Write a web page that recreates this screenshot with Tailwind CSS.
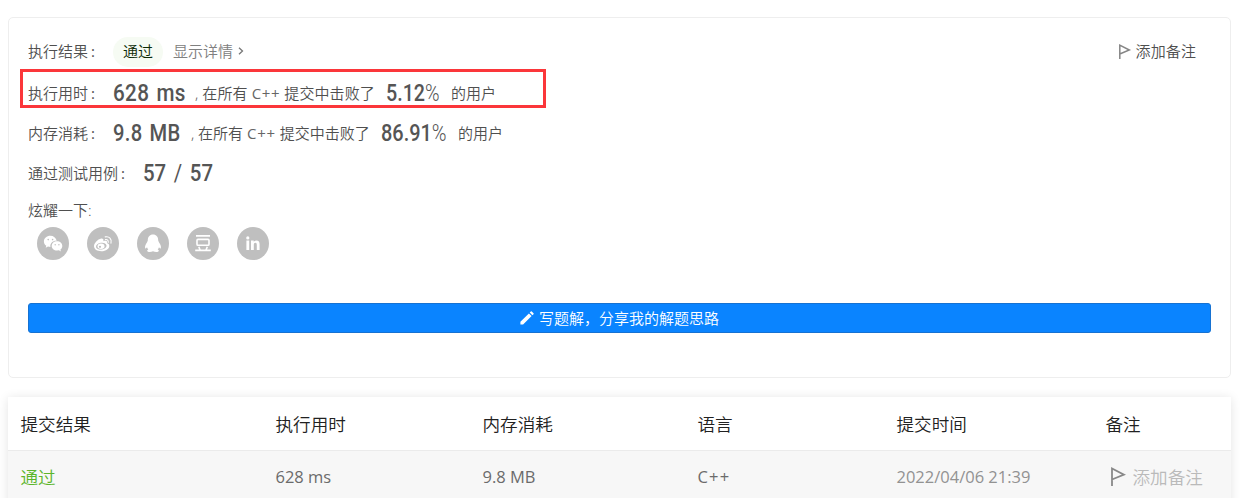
<!DOCTYPE html>
<html lang="zh-CN">
<head>
<meta charset="utf-8">
<title>提交结果</title>
<script src="https://cdn.jsdelivr.net/npm/@tailwindcss/browser@4"></script>
</head>
<body class="h-[498px] overflow-hidden bg-white pt-[17px] pl-2 font-['Open_Sans','Noto_Sans_CJK_SC',sans-serif] text-[15px] font-[350] whitespace-nowrap text-[#4f4f4f]">
<section class="relative h-[361px] w-[1223px] rounded-[5px] border border-[#eeeeee] px-[19px] pt-[17px]">
  <div class="pointer-events-none absolute top-[51px] left-[11px] h-[39px] w-[526px] border-3 border-[#fb363a]"></div>
  <div class="flex h-8 items-center">
    <span class="w-[85px]">执行结果<span class="ml-[3px] font-normal">:</span></span>
    <span class="mt-[2px] flex h-[30px] w-[50px] items-center justify-center rounded-full bg-[#f6fbf3] pb-[2px] text-[#0c2a05]">通过</span>
    <span class="ml-[10px] text-[#808080]">显示详情</span>
    <svg class="ml-[5px] h-[10px] w-[6px]" viewBox="0 0 6 10" fill="none" stroke="#777" stroke-width="1.3"><path d="M1 1.7 4.5 5 1 8.3"/></svg>
    <span class="mr-[15px] ml-auto flex items-center gap-[4px]">
      <svg class="h-[15px] w-[14px]" viewBox="0 0 14 15" fill="none" stroke="#858585" stroke-width="1.5"><path d="M1.8 15V1.2L11.3 6 1.8 10"/></svg>
      <span class="tracking-[.1px]">添加备注</span>
    </span>
  </div>
  <div class="mt-[6px] flex h-10 items-center">
    <span class="w-[85px]">执行用时<span class="ml-[3px] font-normal">:</span></span>
    <span class="w-[82px]"><span class="inline-block origin-left scale-x-[.86] font-[Roboto] text-[24px] font-medium text-[#555] tracking-[.4px] [word-spacing:2px]">628 ms</span></span>
    <span class="w-[191px] tracking-[.1px]">, 在所有 <span class="font-normal tracking-[.7px] text-[#666]">C++</span> 提交中击败了</span>
    <span class="w-[65px]"><span class="inline-block origin-left scale-x-[.82] font-[Roboto] text-[24px] font-medium text-[#555]">5.12<span class="font-light">%</span></span></span>
    <span>的用户</span>
  </div>
  <div class="flex h-10 items-center">
    <span class="w-[85px]">内存消耗<span class="ml-[3px] font-normal">:</span></span>
    <span class="w-[78px]"><span class="inline-block origin-left scale-x-[.84] font-[Roboto] text-[24px] font-medium text-[#555] tracking-[.4px] [word-spacing:2px]">9.8 MB</span></span>
    <span class="w-[190px]">, 在所有 <span class="font-normal tracking-[.7px] text-[#666]">C++</span> 提交中击败了</span>
    <span class="w-[77px]"><span class="inline-block origin-left scale-x-[.83] font-[Roboto] text-[24px] font-medium text-[#555]">86.91<span class="font-light">%</span></span></span>
    <span>的用户</span>
  </div>
  <div class="flex h-10 items-center">
    <span class="w-[115px]">通过测试用例<span class="ml-[3px] font-normal">:</span></span>
    <span class="inline-block origin-left scale-x-[.85] font-[Roboto] text-[24px] font-medium text-[#555] [word-spacing:3px]">57 <span class="font-normal">/</span> 57</span>
  </div>
  <div class="flex h-[34px] items-center">炫耀一下:</div>
  <div class="ml-[9px] flex gap-[18px]">
    <svg class="h-[33px] w-8" preserveAspectRatio="none" viewBox="0 0 32 32"><circle cx="16" cy="16" r="16" fill="#bfbfbf"/><path fill="#fff" d="M13.4 8.6c-3.7 0-6.5 2.4-6.5 5.4 0 1.7.9 3.1 2.4 4.1l-.6 2 2.3-1.2 2.4.4c-.5-3.5 2.4-6.1 6.3-5.9-.7-2.8-3.2-4.8-6.3-4.8z"/><path fill="#fff" d="M20 13.9c-3 0-5.3 2-5.3 4.5s2.3 4.5 5.3 4.5l1.9-.3 2 1.1-.5-1.8c1.2-.8 1.9-2.1 1.9-3.5 0-2.5-2.3-4.5-5.3-4.5z"/><g fill="#bfbfbf"><circle cx="11.2" cy="12.2" r=".8"/><circle cx="15.6" cy="12.2" r=".8"/><circle cx="18.2" cy="17.2" r=".7"/><circle cx="21.9" cy="17.2" r=".7"/></g></svg>
    <svg class="h-[33px] w-8" preserveAspectRatio="none" viewBox="0 0 32 32"><circle cx="16" cy="16" r="16" fill="#bfbfbf"/><path fill="#fff" d="M14.2 11.2c-3.5.6-7.2 4.6-7.2 7.5 0 3 3.5 4.8 7.2 4.8 5 0 8.1-2.6 8.1-5.1 0-1.6-1-2.4-2.4-2.8.7-2-.7-2.7-3.6-1.8.6-1.8-.2-2.8-2.1-2.6z"/><ellipse cx="14.2" cy="18.6" rx="5.3" ry="3.3" fill="#bfbfbf" transform="rotate(-8 14 18)"/><ellipse cx="14" cy="18.7" rx="3.5" ry="2.6" fill="#fff"/><circle cx="13" cy="19.2" r="1.1" fill="#bfbfbf"/><path d="M18.2 9.6c4-.9 6.9 2 5.8 6M18.4 12.2c1.9-.4 3.2.8 2.8 2.7" fill="none" stroke="#fff" stroke-width="1.1" stroke-linecap="round"/></svg>
    <svg class="h-[33px] w-8" preserveAspectRatio="none" viewBox="0 0 32 32"><circle cx="16" cy="16" r="16" fill="#bfbfbf"/><path fill="#fff" d="M16 7.3c-3.3 0-5.3 2.3-5.2 5.8-.3 1-1 2.1-1.8 3.4-.9 1.5-1.2 3-.8 4 .5.7 1.2.2 1.8-.8.3 1 .7 1.7 1.3 2.2-1.7.6-1.4 2.1.4 2.3 1.6.2 3.1-.1 4.3-.7 1.2.6 2.7.9 4.3.7 1.8-.2 2.1-1.7.4-2.3.6-.5 1-1.2 1.3-2.2.6 1 1.3 1.5 1.8.8.4-1 .1-2.5-.8-4-.8-1.3-1.5-2.4-1.8-3.4.1-3.5-1.9-5.8-5.2-5.8z"/></svg>
    <svg class="h-[33px] w-8" preserveAspectRatio="none" viewBox="0 0 32 32"><circle cx="16" cy="16" r="16" fill="#bfbfbf"/><g fill="none" stroke="#fff" stroke-width="1.6"><path d="M9 8.6h14M8.2 22.6h15.6M11.8 19.2l1.3 3.2M20.3 19.2 19 22.4"/><rect x="10" y="12" width="12" height="5.7" rx="1"/></g></svg>
    <svg class="h-[33px] w-8" preserveAspectRatio="none" viewBox="0 0 32 32"><circle cx="16" cy="16" r="16" fill="#bfbfbf"/><g fill="#fff"><circle cx="10.8" cy="10.6" r="1.6"/><path d="M9.4 13.2h2.8v9.2H9.4zM14 13.2h2.7v1.2c.7-1 1.7-1.4 2.8-1.4 2.2 0 3.1 1.4 3.1 3.9v5.5h-2.8v-5c0-1.4-.4-2.1-1.4-2.1s-1.6.7-1.6 2.1v5H14z"/></g></svg>
  </div>
  <button class="mt-[43px] flex h-[30px] w-[1183px] items-center justify-center gap-[5px] rounded-[3px] border border-[#1672d2] bg-[#0a84ff] text-white">
    <svg class="h-[14px] w-[14px]" viewBox="0 0 14 14" fill="#fff"><path d="M.4 10.8 8.9 2.4l2.7 2.7-8.5 8.5H.4zM9.7 1.6 10.8.5q.5-.5 1 0l1.7 1.7q.5.5 0 1l-1.1 1.1z"/></svg>
    <span>写题解，分享我的解题思路</span>
  </button>
</section>
<section class="mt-[19px] h-[120px] w-[1223px] bg-white text-[17.6px] shadow-[0_1px_10px_rgba(0,0,0,.11)]">
  <div class="grid h-[54px] grid-cols-[255px_207px_215px_199px_209px_1fr] items-center border-b border-[#ebebeb] pt-px pl-[12.5px] text-[#212121]">
    <span>提交结果</span><span>执行用时</span><span>内存消耗</span><span>语言</span><span>提交时间</span><span>备注</span>
  </div>
  <div class="grid h-[52px] grid-cols-[255px_207px_215px_199px_209px_1fr] items-center bg-[#f7f7f7] pl-[12.5px] text-[16.5px] font-normal text-[#6b6b6b]">
    <span class="text-[17.6px] font-[350] text-[#5cb52b]">通过</span><span>628 ms</span><span>9.8 MB</span><span class="tracking-[1.2px]">C++</span><span class="text-[#929292]">2022/04/06 21:39</span>
    <span class="flex items-center gap-[7px] pl-[4px] text-[17.6px] font-[350] text-[#bababa]">
      <svg class="h-5 w-4" viewBox="0 0 16 20" fill="none" stroke="#888" stroke-width="1.8"><path d="M2 19V1.5L14 7.7 2 12.5"/></svg>
      <span>添加备注</span>
    </span>
  </div>
  <div class="h-[14px] bg-[#f7f7f7]"></div>
</section>
</body>
</html>
